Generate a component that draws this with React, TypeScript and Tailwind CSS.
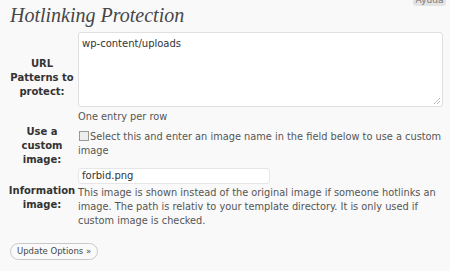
// Hotlinking Protection settings panel (WordPress-style options page)

const sans = "font-['DejaVu_Sans',Verdana,sans-serif]";

function Label({ lines }: { lines: string[] }) {
  return (
    <div className="text-center text-[10px] leading-[14px] font-bold text-[#333]">
      {lines.map((l) => (
        <div key={l}>{l}</div>
      ))}
    </div>
  );
}

export default function App() {
  return (
    <div className={`relative w-[450px] h-[271px] overflow-hidden bg-[#f9f9f9] ${sans} text-[#333]`}>
      {/* help tab, cut off at the top edge */}
      <div className="absolute top-0 right-[4px] h-[6px] w-[33px] overflow-hidden rounded-b-[3px] bg-[#e4e4e4]">
        <div className="-mt-[6px] text-center text-[9px] leading-[12px] text-[#777]">Ayuda</div>
      </div>

      {/* Header */}
      <h2 className="pl-[10px] pt-[2px] font-['Liberation_Serif',Georgia,serif] text-[20px] italic leading-[26px] text-[#464646]">
        Hotlinking Protection
      </h2>

      {/* Form table */}
      <div className="mt-[4px] grid grid-cols-[68px_1fr] items-center gap-x-[2px] gap-y-[1px] pl-[8px] pr-[7px] text-[9.8px]">
        <Label lines={["URL", "Patterns to", "protect:"]} />
        <div>
          <div className="relative h-[75px] rounded-[3px] border border-[#dfdfdf] bg-white px-[3px] pt-[4px] text-[10px] leading-[14px] text-[#333]">
            wp-content/uploads
            <svg className="absolute bottom-[1px] right-[1px]" width="8" height="8" viewBox="0 0 8 8">
              <path d="M7 1L1 7M7 4L4 7" stroke="#bbb" strokeWidth="1" />
            </svg>
          </div>
          <div className="mt-[3px] leading-[14px] text-[#555]">One entry per row</div>
        </div>

        <Label lines={["Use a", "custom", "image:"]} />
        <div className="pb-[5px] leading-[14px] text-[#555]">
          <span className="mr-px ml-px inline-block h-[10px] w-[10px] translate-y-[1px] border border-[#999] bg-[#eee] align-baseline" />
          Select this and enter an image name in the field below to use a custom image
        </div>

        <Label lines={["Information", "image:"]} />
        <div>
          <div className="h-[16px] w-[192px] rounded-[3px] border border-[#e6e6e6] bg-white px-[3px] text-[10px] leading-[14px] text-[#333]">
            forbid.png
          </div>
          <div className="mt-[2px] leading-[14px] text-[#555]">
            This image is shown instead of the original image if someone hotlinks an image. The path is relativ to your template directory. It is only used if custom image is checked.
          </div>
        </div>
      </div>

      {/* Submit */}
      <div className="pl-[10px] pt-[9px]">
        <button className="h-[17px] rounded-full border border-[#c9c9c9] bg-[#fafafa] px-[6px] text-[8.5px] leading-[15px] text-[#464646]">
          Update Options »
        </button>
      </div>
    </div>
  );
}
